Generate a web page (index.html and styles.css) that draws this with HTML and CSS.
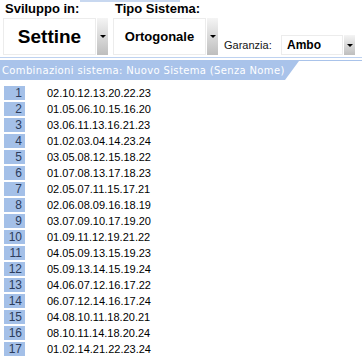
FILE: index.html
```html
<!DOCTYPE html>
<html lang="it">
  <head>
    <meta charset="UTF-8"/>
    <title>Sistema</title>
    <link rel="stylesheet" href="styles.css">
  </head>
  <body>
    <div class="tabLine"></div>
    <div class="toolbar">
      <div class="field">
        <p class="field_label">Sviluppo in:</p>
        <div class="select select_big">
          <div class="select_box select_box_settine">Settine</div>
          <div class="select_arrow"><span class="arrow"></span></div>
        </div>
      </div>
      <div class="field">
        <p class="field_label">Tipo Sistema:</p>
        <div class="select select_big">
          <div class="select_box select_box_tipo">Ortogonale</div>
          <div class="select_arrow"><span class="arrow"></span></div>
        </div>
      </div>
      <div class="garanzia">
        <span class="garanzia_label">Garanzia:</span>
        <div class="select select_small">
          <div class="select_box select_box_ambo">Ambo</div>
          <div class="select_arrow"><span class="arrow"></span></div>
        </div>
      </div>
    </div>
    <div class="separator"></div>
    <div class="titleBar">
      <div class="titleBar_tab">Combinazioni sistema: Nuovo Sistema (Senza Nome)</div>
    </div>
    <div class="rows">
      <div class="row"><span class="row_num">1</span><span class="row_text">02.10.12.13.20.22.23</span></div>
      <div class="row"><span class="row_num">2</span><span class="row_text">01.05.06.10.15.16.20</span></div>
      <div class="row"><span class="row_num">3</span><span class="row_text">03.06.11.13.16.21.23</span></div>
      <div class="row"><span class="row_num">4</span><span class="row_text">01.02.03.04.14.23.24</span></div>
      <div class="row"><span class="row_num">5</span><span class="row_text">03.05.08.12.15.18.22</span></div>
      <div class="row"><span class="row_num">6</span><span class="row_text">01.07.08.13.17.18.23</span></div>
      <div class="row"><span class="row_num">7</span><span class="row_text">02.05.07.11.15.17.21</span></div>
      <div class="row"><span class="row_num">8</span><span class="row_text">02.06.08.09.16.18.19</span></div>
      <div class="row"><span class="row_num">9</span><span class="row_text">03.07.09.10.17.19.20</span></div>
      <div class="row"><span class="row_num">10</span><span class="row_text">01.09.11.12.19.21.22</span></div>
      <div class="row"><span class="row_num">11</span><span class="row_text">04.05.09.13.15.19.23</span></div>
      <div class="row"><span class="row_num">12</span><span class="row_text">05.09.13.14.15.19.24</span></div>
      <div class="row"><span class="row_num">13</span><span class="row_text">04.06.07.12.16.17.22</span></div>
      <div class="row"><span class="row_num">14</span><span class="row_text">06.07.12.14.16.17.24</span></div>
      <div class="row"><span class="row_num">15</span><span class="row_text">04.08.10.11.18.20.21</span></div>
      <div class="row"><span class="row_num">16</span><span class="row_text">08.10.11.14.18.20.24</span></div>
      <div class="row"><span class="row_num">17</span><span class="row_text">01.02.14.21.22.23.24</span></div>
    </div>
  </body>
</html>
```

FILE: styles.css
```css
body {
  margin: 0;
  background-color: white;
  font-family: "Liberation Sans", Arial, sans-serif;
  color: black;
  overflow: hidden;
}
.tabLine {
  height: 2px;
  width: 100px;
  margin-left: 80px;
  background-color: rgb(200, 216, 240);
}
.toolbar {
  display: flex;
  align-items: flex-end;
  height: 53px;
  padding-left: 3px;
}
  .field {
    display: flex;
    flex-direction: column;
    margin-right: 5px;
  }
  .field_label {
    margin: 0 0 2px 2px;
    font-size: 13px;
    font-weight: bold;
    line-height: 14px;
  }
  .select {
    display: flex;
    gap: 1px;
  }
  .select_big {
    height: 37px;
  }
  .select_small {
    height: 20px;
  }
  .select_box {
    display: flex;
    align-items: center;
    justify-content: center;
    border: 1px solid rgb(236, 236, 236);
    font-weight: bold;
    box-sizing: border-box;
  }
  .select_box_settine {
    width: 93px;
    font-size: 19px;
  }
  .select_box_tipo {
    width: 93px;
    font-size: 13px;
  }
  .select_box_ambo {
    width: 62px;
    font-size: 12px;
    justify-content: flex-start;
    padding-left: 5px;
  }
  .select_arrow {
    width: 11px;
    display: flex;
    align-items: center;
    justify-content: center;
    background: linear-gradient(rgb(244, 244, 244), rgb(190, 190, 190));
  }
    .arrow {
      width: 0;
      height: 0;
      border-left: 3px solid transparent;
      border-right: 3px solid transparent;
      border-top: 3px solid black;
    }
  .garanzia {
    display: flex;
    align-items: center;
    margin-left: 1px;
  }
  .garanzia_label {
    font-size: 11px;
    width: 57px;
    color: rgb(20, 20, 20);
  }
.separator {
  height: 1px;
  margin-top: 2px;
  background-color: rgb(190, 210, 240);
}
.titleBar {
  margin-top: 2px;
  border-top: 1px solid rgb(169, 195, 234);
}
  .titleBar_tab {
    width: 299px;
    height: 19px;
    padding-left: 2px;
    box-sizing: border-box;
    background-color: rgb(169, 195, 234);
    clip-path: polygon(0 0, 100% 0, calc(100% - 14px) 100%, 0 100%);
    color: white;
    font-family: "DejaVu Sans", Verdana, sans-serif;
    font-size: 10px;
    line-height: 19px;
    letter-spacing: 0.35px;
    white-space: nowrap;
  }
.rows {
  padding: 6px 0 0 4px;
}
  .row {
    display: flex;
    align-items: center;
    height: 14px;
    margin-bottom: 2px;
  }
  .row_num {
    width: 21px;
    height: 14px;
    box-sizing: border-box;
    padding-right: 3px;
    background-color: rgb(164, 192, 232);
    text-align: right;
    font-size: 12px;
    line-height: 14px;
    color: rgb(44, 60, 92);
  }
  .row_text {
    margin-left: 22px;
    font-size: 11px;
    line-height: 14px;
  }
```
